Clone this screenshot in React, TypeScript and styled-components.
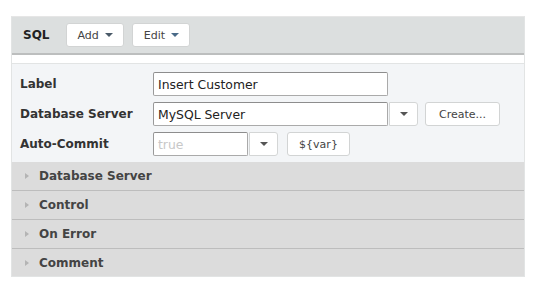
import React from "react";
import styled, { createGlobalStyle } from "styled-components";

const Global = createGlobalStyle`
  html, body { margin: 0; padding: 0; background: #fff; }
  body { font-family: "DejaVu Sans", Verdana, sans-serif; color: #333; }
`;

const Page = styled.div`
  padding: 16px 0 0 11px;
  width: 514px;
`;

const Panel = styled.div`
  border: 1px solid #e2e4e4;
  border-top-color: #e6e6e6;
  background: #fff;
`;

const Toolbar = styled.div`
  display: flex;
  align-items: center;
  height: 36px;
  padding: 0 0 0 11px;
  background: #dcdfdf;
  border-bottom: 2px solid #bcbebe;
`;

const Title = styled.span`
  font-weight: bold;
  font-size: 12px;
  color: #222;
  margin-right: 16px;
`;

const MenuButton = styled.button`
  display: inline-flex;
  align-items: center;
  gap: 6px;
  height: 24px;
  padding: 0 10px 0 11px;
  margin-right: 8px;
  background: #fff;
  border: 1px solid #d2d4d4;
  border-radius: 3px;
  font-family: "DejaVu Sans", Verdana, sans-serif;
  font-size: 11px;
  color: #444;
`;

const Caret = styled.span<{ $color?: string }>`
  width: 0;
  height: 0;
  border-left: 4px solid transparent;
  border-right: 4px solid transparent;
  border-top: 4px solid ${(p) => p.$color || "#4a5a68"};
`;

const Spacer = styled.div`
  height: 8px;
  background: #fff;
  border-bottom: 1px solid #e2e4e4;
`;

const Form = styled.div`
  background: #f3f5f7;
  padding: 8px 0 6px 8px;
  display: grid;
  grid-template-columns: 133px auto;
  row-gap: 6px;
  align-items: center;
`;

const Label = styled.label`
  font-weight: bold;
  font-size: 12px;
  color: #333;
`;

const Controls = styled.div`
  display: flex;
  align-items: center;
`;

const Input = styled.div<{ $w: number; $placeholder?: boolean }>`
  box-sizing: border-box;
  width: ${(p) => p.$w}px;
  height: 24px;
  display: flex;
  align-items: center;
  padding-left: 4px;
  background: #fff;
  border: 1px solid #aaa;
  border-top-color: #8d8d8d;
  border-left-color: #999;
  border-radius: 2px;
  font-size: 12.4px;
  color: ${(p) => (p.$placeholder ? "#c8c8c8" : "#222")};
`;

const DropBtn = styled.div`
  box-sizing: border-box;
  width: 29px;
  height: 24px;
  display: flex;
  align-items: center;
  justify-content: center;
  background: #fff;
  border: 1px solid #d4d6d6;
  border-radius: 0 3px 3px 0;
  margin-left: 1px;
`;

const Button = styled.button<{ $ml: number; $w: number }>`
  box-sizing: border-box;
  margin-left: ${(p) => p.$ml}px;
  width: ${(p) => p.$w}px;
  height: 24px;
  background: #fff;
  border: 1px solid #d2d4d4;
  border-radius: 3px;
  font-family: "DejaVu Sans", Verdana, sans-serif;
  font-size: 11px;
  color: #444;
  padding: 0;
`;

const Section = styled.div<{ $last?: boolean }>`
  display: flex;
  align-items: center;
  height: ${(p) => (p.$last ? 27 : 28)}px;
  background: #dcdcdc;
  border-bottom: ${(p) => (p.$last ? "none" : "1px solid #bdbdbd")};
  padding-left: 13px;
`;

const Arrow = styled.span`
  width: 0;
  height: 0;
  border-top: 3px solid transparent;
  border-bottom: 3px solid transparent;
  border-left: 4px solid #b4b4b4;
  margin-right: 10px;
`;

const SectionTitle = styled.span`
  font-weight: bold;
  font-size: 12px;
  color: #444;
`;

export default function App() {
  return (
    <>
      <Global />
      <Page>
        <Panel>
          <Toolbar>
            <Title>SQL</Title>
            <MenuButton>
              Add <Caret />
            </MenuButton>
            <MenuButton>
              Edit <Caret $color="#4a6a88" />
            </MenuButton>
          </Toolbar>
          <Spacer />
          <Form>
            <Label>Label</Label>
            <Controls>
              <Input $w={235}>Insert Customer</Input>
            </Controls>
            <Label>Database Server</Label>
            <Controls>
              <Input $w={235}>MySQL Server</Input>
              <DropBtn>
                <Caret $color="#555" />
              </DropBtn>
              <Button $ml={7} $w={75}>Create...</Button>
            </Controls>
            <Label>Auto-Commit</Label>
            <Controls>
              <Input $w={95} $placeholder>true</Input>
              <DropBtn>
                <Caret $color="#555" />
              </DropBtn>
              <Button $ml={9} $w={63}>{"${var}"}</Button>
            </Controls>
          </Form>
          {["Database Server", "Control", "On Error", "Comment"].map((t, i, a) => (
            <Section key={t} $last={i === a.length - 1}>
              <Arrow />
              <SectionTitle>{t}</SectionTitle>
            </Section>
          ))}
        </Panel>
      </Page>
    </>
  );
}
